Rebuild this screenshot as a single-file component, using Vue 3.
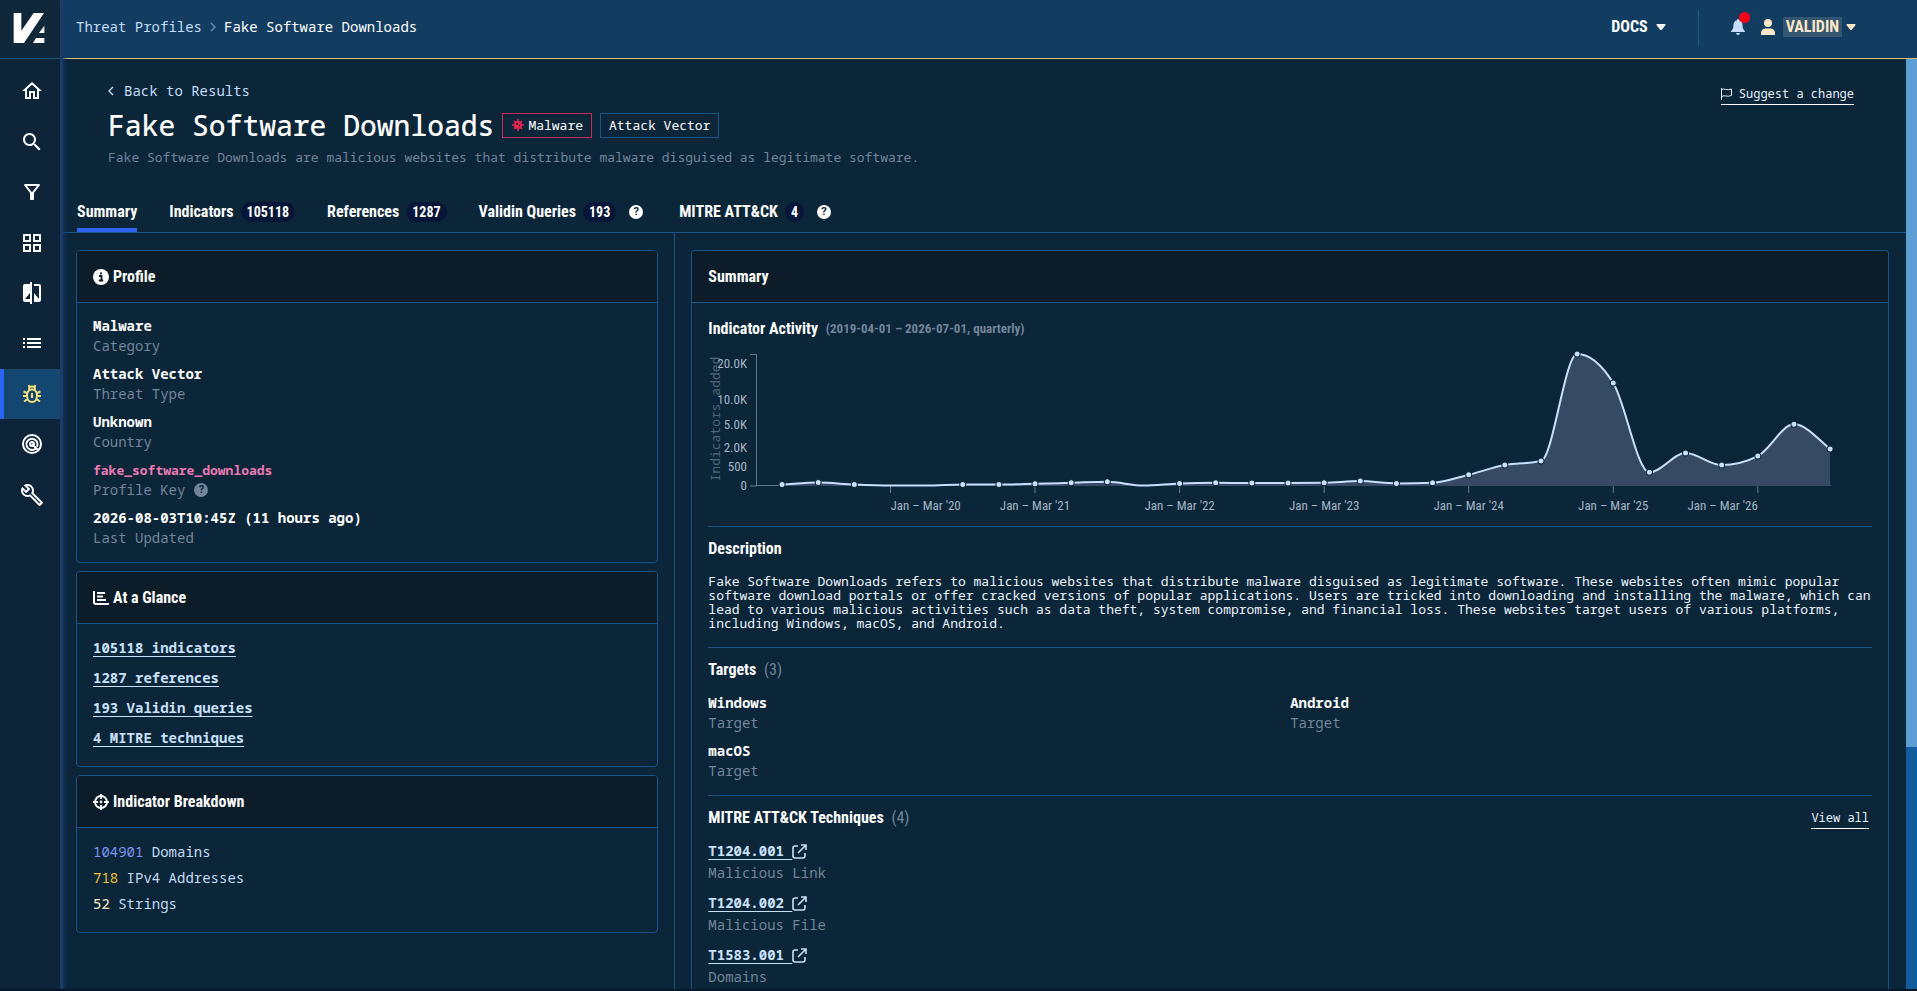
<script setup>
import { ref, computed } from 'vue';

const navItems = [
    { name: 'Home', path: 'M12 5.69l5 4.5V18h-2v-6H9v6H7v-7.81l5-4.5M12 3L2 12h3v8h6v-6h2v6h6v-8h3L12 3z' },
    { name: 'Search', path: 'M15.5 14h-.79l-.28-.27C15.41 12.59 16 11.11 16 9.5 16 5.91 13.09 3 9.5 3S3 5.91 3 9.5 5.91 16 9.5 16c1.61 0 3.09-.59 4.23-1.57l.27.28v.79l5 4.99L20.49 19l-4.99-5zm-6 0C7.01 14 5 11.99 5 9.5S7.01 5 9.5 5 14 7.01 14 9.5 11.99 14 9.5 14z' },
    { name: 'Filters', path: 'M7 6h10l-5.01 6.3L7 6zm-2.75-.39C6.27 8.2 10 13 10 13v6c0 .55.45 1 1 1h2c.55 0 1-.45 1-1v-6s3.72-4.8 5.74-7.39c.51-.66.04-1.61-.79-1.61H5.04c-.83 0-1.3.95-.79 1.61z' },
    { name: 'Dashboard', path: 'M3 3v8h8V3H3zm6 6H5V5h4v4zm-6 4v8h8v-8H3zm6 6H5v-4h4v4zm4-16v8h8V3h-8zm6 6h-4V5h4v4zm-6 4v8h8v-8h-8zm6 6h-4v-4h4v4z' },
    { name: 'Compare', path: 'M10 3H5c-1.1 0-2 .9-2 2v14c0 1.1.9 2 2 2h5v2h2V1h-2v2zm0 15H5l5-6v6zm9-15h-5v2h5v13l-5-6v9h5c1.1 0 2-.9 2-2V5c0-1.1-.9-2-2-2z' },
    { name: 'Lists', path: 'M3 13h2v-2H3v2zm0 4h2v-2H3v2zm0-8h2V7H3v2zm4 4h14v-2H7v2zm0 4h14v-2H7v2zM7 7v2h14V7H7z' },
    { name: 'Threat Profiles', active: true, stroke: 'M8.500 3l1 2M15.500 3l-1 2M9 7.500V7a3 2.500 0 0 1 6 0v.5M12 7.500c3 0 5 2.500 5 6s-2 6.500-5 6.500-5-3-5-6.500 2-6 5-6zM12 11v5M7 11l-3.500-1.500M17 11l3.500-1.500M7 14H3M17 14h4M7.500 17l-3.500 2.500M16.500 17l3.500 2.500' },
    { name: 'Radar', stroke: 'M12 3a9 9 0 1 0 0 18 9 9 0 1 0 0-18M15.800 16.400a5.600 5.600 0 1 1 1.200-1.600M12 12l6 6M12 10a2 2 0 1 0 0 4 2 2 0 1 0 0-4' },
    { name: 'Tools', path: 'M22.61 18.99l-9.08-9.08c.93-2.34.45-5.1-1.44-7C9.79.61 6.21.4 3.66 2.26L7.5 6.11 6.08 7.52 2.25 3.69C.39 6.23.6 9.82 2.9 12.11c1.86 1.86 4.57 2.35 6.89 1.48l9.11 9.11c.39.39 1.02.39 1.41 0l2.3-2.3c.4-.38.4-1.01 0-1.41zm-3 1.6l-9.46-9.46c-.61.45-1.29.72-2 .82-1.36.2-2.79-.21-3.83-1.25C3.37 9.76 2.93 8.5 3 7.26l3.09 3.09 4.24-4.24-3.09-3.09c1.24-.07 2.49.37 3.44 1.31 1.08 1.08 1.49 2.57 1.24 3.96-.12.71-.42 1.37-.88 1.96l9.45 9.45-.88.89z' },
];

const activeTab = ref('Summary');
const tabs = [
    { name: 'Summary' },
    { name: 'Indicators', count: 105118 },
    { name: 'References', count: 1287 },
    { name: 'Validin Queries', count: 193, help: true },
    { name: 'MITRE ATT&CK', count: 4, help: true },
];

const profile = [
    { value: 'Malware', label: 'Category' },
    { value: 'Attack Vector', label: 'Threat Type' },
    { value: 'Unknown', label: 'Country' },
    { value: 'fake_software_downloads', label: 'Profile Key', code: true },
    { value: '2026-08-03T10:45Z (11 hours ago)', label: 'Last Updated' },
];

const glance = ['105118 indicators', '1287 references', '193 Validin queries', '4 MITRE techniques'];

const breakdown = [
    { count: 104901, label: 'Domains', kind: 'domain' },
    { count: 718, label: 'IPv4 Addresses', kind: 'ip' },
    { count: 52, label: 'Strings', kind: 'string' },
];

const targets = ['Windows', 'Android', 'macOS'];

const techniques = [
    { id: 'T1204.001', name: 'Malicious Link' },
    { id: 'T1204.002', name: 'Malicious File' },
    { id: 'T1583.001', name: 'Domains' },
];

// Chart geometry, one point per quarter
const baseline = 148;
const startX = 74;
const stepX = 36.12;
const emptyQuarters = [3, 4, 10];
const heights = [1.5, 3.5, 1.5, 0.5, 0.5, 1.5, 1.5, 2.3, 3.3, 4.3, 0.5, 2.7, 3.3, 3, 3, 3.3, 5, 2.7, 3.3, 11.3, 21, 25, 132, 103, 13.7, 33, 21, 30, 61.7, 37];
const points = heights.map((h, i) => ({ x: startX + i * stepX, y: baseline - h }));
const dots = points.filter((p, i) => !emptyQuarters.includes(i));

const yTicks = [
    { label: '20.0K', y: 26 },
    { label: '10.0K', y: 62 },
    { label: '5.0K', y: 87 },
    { label: '2.0K', y: 110 },
    { label: '500', y: 129 },
    { label: '0', y: 148 },
];
const xTicks = ['20', '21', '22', '23', '24', '25', '26'].map((year, i, all) => ({
    label: `Jan – Mar '${year}`,
    x: startX + (3 + i * 4) * stepX,
    anchor: i === 0 ? 'start' : i === all.length - 1 ? 'end' : 'middle',
}));

// Smooth line that never overshoots its points
const linePath = computed(() => {
    const slopes = points.slice(1).map((p, i) => (p.y - points[i].y) / stepX);
    const tangents = points.map((p, i) => {
        if (i === 0) return slopes[0];
        if (i === points.length - 1) return slopes[i - 1] * 1.2;
        const a = slopes[i - 1];
        const b = slopes[i];
        if (a * b <= 0) return 0;
        return Math.sign(a) * 2 * Math.min(Math.abs(a), Math.abs(b), Math.abs(a + b) / 4);
    });
    let d = `M${points[0].x},${points[0].y}`;
    for (let i = 1; i < points.length; i++) {
        const p = points[i - 1];
        const q = points[i];
        const k = stepX / 3;
        d += `C${p.x + k},${p.y + k * tangents[i - 1]},${q.x - k},${q.y - k * tangents[i]},${q.x},${q.y}`;
    }
    return d;
});
const areaPath = computed(() => `${linePath.value}V${baseline}H${startX}Z`);
</script>

<template>
    <div class="app">
        <aside class="sidebar">
            <a class="logo" href="#" aria-label="Validin">
                <svg width="32" height="32" viewBox="0 0 96 96" fill="#fff">
                    <path d="M2 3H25V56L62 3H93L33 93H2Z" />
                    <path d="M94 41V63H78ZM69 78H94V93H60Z" />
                </svg>
            </a>
            <nav class="nav">
                <a v-for="item in navItems" :key="item.name" href="#" class="nav-item" :class="{ active: item.active }" :aria-label="item.name">
                    <svg width="24" height="24" viewBox="0 0 24 24">
                        <path v-if="item.path" :d="item.path" fill="currentColor" />
                        <path v-else :d="item.stroke" fill="none" stroke="currentColor" stroke-width="2" />
                    </svg>
                </a>
            </nav>
        </aside>

        <div class="page">
            <header class="topbar">
                <nav class="crumbs">
                    <a href="#">Threat Profiles</a>
                    <svg width="6" height="10" viewBox="0 0 6 10" fill="none" stroke="#6f90ab" stroke-width="1.4"><path d="M1 1l4 4-4 4" /></svg>
                    <span>Fake Software Downloads</span>
                </nav>
                <div class="account">
                    <button class="menu docs">
                        DOCS
                        <svg width="10" height="6" viewBox="0 0 10 6" fill="currentColor"><path d="M1 0h8q1 0 .5 1L6 5.500q-1 1-2 0L.5 1Q0 0 1 0z" /></svg>
                    </button>
                    <button class="bell" aria-label="Notifications">
                        <svg width="14" height="16" viewBox="0 0 14 16" fill="#c5dcfa"><path d="M7 0c.7 0 1 .5 1 1.200C10.300 1.700 11.500 3.600 11.500 6c0 3.500 1 4.500 2.300 6 .4.500 0 1-.5 1H.7c-.5 0-.9-.5-.5-1C1.500 10.500 2.500 9.500 2.500 6c0-2.400 1.200-4.300 3.500-4.800C6 .5 6.300 0 7 0zM5 14h4c0 1.200-1 2-2 2s-2-.8-2-2z" /></svg>
                        <span class="dot"></span>
                    </button>
                    <button class="menu user">
                        <svg width="14" height="16" viewBox="0 0 14 16" fill="currentColor"><circle cx="7" cy="4" r="4" /><path d="M0 16v-2c0-3 2-4.500 4.500-4.500h5C12 9.500 14 11 14 14v2z" /></svg>
                        <span class="user-name">VALIDIN</span>
                        <svg width="10" height="6" viewBox="0 0 10 6" fill="currentColor"><path d="M1 0h8q1 0 .5 1L6 5.500q-1 1-2 0L.5 1Q0 0 1 0z" /></svg>
                    </button>
                </div>
            </header>

            <div class="viewport">
                <main class="content">
                    <div class="intro">
                        <div>
                            <a class="back" href="#">
                                <svg width="6" height="10" viewBox="0 0 6 10" fill="none" stroke="currentColor" stroke-width="1.4"><path d="M5 1L1 5l4 4" /></svg>
                                Back to Results
                            </a>
                            <div class="title-row">
                                <h1>Fake Software Downloads</h1>
                                <span class="tag tag-malware">
                                    <svg width="12" height="12" viewBox="0 0 12 12">
                                        <circle cx="6" cy="6" r="4" fill="#e5254f" />
                                        <path d="M6 0v12M0 6h12M2 2l8 8M10 2l-8 8" stroke="#e5254f" stroke-width="1.6" />
                                        <circle cx="5" cy="5" r="1" fill="#0b2539" /><circle cx="7.500" cy="6.500" r=".7" fill="#0b2539" />
                                    </svg>
                                    Malware
                                </span>
                                <span class="tag">Attack Vector</span>
                            </div>
                            <p class="lead">Fake Software Downloads are malicious websites that distribute malware disguised as legitimate software.</p>
                        </div>
                        <a class="small-link suggest" href="#">
                            <svg width="11" height="12" viewBox="0 0 11 12" fill="none" stroke="currentColor"><path d="M.5 0v12M.5 1.500C3 0 6 3 10.500 1v6.500C6 9.500 4 6.500.5 8.500" /></svg>
                            Suggest a change
                        </a>
                    </div>

                    <div class="tabs" role="tablist">
                        <div v-for="tab in tabs" :key="tab.name" class="tab">
                            <button role="tab" :class="{ selected: activeTab === tab.name }" @click="activeTab = tab.name">
                                {{ tab.name }}
                                <span v-if="tab.count" class="pill">{{ tab.count }}</span>
                            </button>
                            <span v-if="tab.help" class="help">?</span>
                        </div>
                    </div>

                    <div class="columns">
                        <div class="side-column">
                            <section class="card">
                                <h2>
                                    <svg width="16" height="16" viewBox="0 0 16 16"><circle cx="8" cy="8" r="8" fill="#fff" /><path d="M6 7h2.500v4M5.800 11.500h4.400M7 4.300h2" fill="none" stroke="#0c1c28" stroke-width="1.8" /></svg>
                                    Profile
                                </h2>
                                <dl class="facts">
                                    <div v-for="fact in profile" :key="fact.label">
                                        <dd :class="{ code: fact.code }">{{ fact.value }}</dd>
                                        <dt>{{ fact.label }} <span v-if="fact.code" class="help muted">?</span></dt>
                                    </div>
                                </dl>
                            </section>

                            <section class="card">
                                <h2>
                                    <svg width="16" height="14" viewBox="0 0 16 14" fill="none" stroke="#fff" stroke-width="2"><path d="M1 0v11q0 2 2 2h13M4 2h8M4 5.500h6M4 9h9" /></svg>
                                    At a Glance
                                </h2>
                                <ul class="glance">
                                    <li v-for="item in glance" :key="item"><a href="#">{{ item }}</a></li>
                                </ul>
                            </section>

                            <section class="card">
                                <h2>
                                    <svg width="16" height="16" viewBox="0 0 16 16" fill="none" stroke="#fff" stroke-width="1.8"><circle cx="8" cy="8" r="6" /><path d="M8 0v5M8 11v5M0 8h5M11 8h5" /><circle cx="8" cy="8" r=".5" /></svg>
                                    Indicator Breakdown
                                </h2>
                                <ul class="breakdown">
                                    <li v-for="row in breakdown" :key="row.label"><span :class="row.kind">{{ row.count }}</span> {{ row.label }}</li>
                                </ul>
                            </section>
                        </div>

                        <div class="main-column">
                            <section class="card summary">
                                <h2>Summary</h2>
                                <div class="summary-body">
                                    <h3>Indicator Activity <small>(2019-04-01 – 2026-07-01, quarterly)</small></h3>
                                    <svg class="chart" viewBox="0 1 1163 171">
                                        <text class="y-title" transform="translate(12 81) rotate(-90)" text-anchor="middle">Indicators added</text>
                                        <text v-for="tick in yTicks" :key="tick.label" class="tick" x="39" :y="tick.y + 4" text-anchor="end">{{ tick.label }}</text>
                                        <path class="axis" d="M42 16.500h6.500v131.500h-6.500M48 147.500H1122" />
                                        <g v-for="tick in xTicks" :key="tick.label">
                                            <path class="axis" :d="`M${tick.x} 148v7`" />
                                            <text class="tick" :x="tick.x" y="172" :text-anchor="tick.anchor">{{ tick.label }}</text>
                                        </g>
                                        <path :d="areaPath" class="area" />
                                        <path :d="linePath" class="line" />
                                        <circle v-for="dot in dots" :key="dot.x" :cx="dot.x" :cy="dot.y" r="3" class="point" />
                                    </svg>

                                    <div class="block">
                                        <h3>Description</h3>
                                        <p class="description">Fake Software Downloads refers to malicious websites that distribute malware disguised as legitimate software. These websites often mimic popular software download portals or offer cracked versions of popular applications. Users are tricked into downloading and installing the malware, which can lead to various malicious activities such as data theft, system compromise, and financial loss. These websites target users of various platforms, including Windows, macOS, and Android.</p>
                                    </div>

                                    <div class="block">
                                        <h3>Targets <span class="total">(3)</span></h3>
                                        <dl class="targets">
                                            <div v-for="target in targets" :key="target">
                                                <dd>{{ target }}</dd>
                                                <dt>Target</dt>
                                            </div>
                                        </dl>
                                    </div>

                                    <div class="block">
                                        <div class="block-head">
                                            <h3>MITRE ATT&amp;CK Techniques <span class="total">(4)</span></h3>
                                            <a class="small-link" href="#">View all</a>
                                        </div>
                                        <ul class="techniques">
                                            <li v-for="item in techniques" :key="item.id">
                                                <a href="#"><span>{{ item.id }}&nbsp;</span><svg width="15" height="15" viewBox="0 0 15 15" fill="none" stroke="currentColor" stroke-width="1.6"><path d="M6 2H3Q1 2 1 4v8q0 2 2 2h8q2 0 2-2V9M9 1h5v5M14 1L6 9" /></svg></a>
                                                <p>{{ item.name }}</p>
                                            </li>
                                        </ul>
                                    </div>
                                </div>
                            </section>
                        </div>
                    </div>
                </main>
                <div class="scrollbar"><div class="thumb"></div></div>
            </div>
        </div>
    </div>
</template>

<style>
body {
    margin: 0;
    background: #0b2539;
}
</style>

<style scoped>
.app {
    --mono: "Noto Sans Mono", "DejaVu Sans Mono", monospace;
    --condensed: "Roboto Condensed", "Liberation Sans Narrow", Roboto, sans-serif;
    --line: #1a5484;
    --muted: #71869a;
    display: flex;
    height: 100vh;
    box-sizing: border-box;
    border-bottom: 2px solid #07182b;
    overflow: hidden;
    background: #0b2539;
    color: #fff;
    font-family: var(--mono);
    font-size: 14px;
    line-height: 20px;
}

a {
    color: inherit;
    text-decoration: none;
}

button {
    border: 0;
    padding: 0;
    background: none;
    color: inherit;
    font: inherit;
    cursor: pointer;
}

h1, h2, h3, p, ul, dl, dd {
    margin: 0;
    padding: 0;
}

ul {
    list-style: none;
}

svg {
    flex: none;
}

/* Sidebar */
.sidebar {
    position: relative;
    z-index: 1;
    flex: none;
    width: 60px;
    border-right: 3px solid #1b3c6b;
    background: #0e2439;
    box-shadow: 1px 0 5px #14396a;
}

.logo {
    display: flex;
    align-items: center;
    height: 59px;
    padding-left: 13px;
    padding-bottom: 2px;
    box-sizing: border-box;
    border-bottom: 1px solid var(--line);
    background: #11273a;
}

.nav {
    display: grid;
    grid-auto-rows: 1fr;
    height: 454px;
    padding-top: 7px;
}

.nav-item {
    display: flex;
    align-items: center;
    justify-content: center;
    border-left: 4px solid transparent;
}

.nav-item.active {
    border-color: #2c64f6;
    background: #134770;
    color: #f4dd7c;
}

/* Top bar */
.page {
    display: flex;
    flex-direction: column;
    flex: 1;
    min-width: 0;
}

.topbar {
    display: flex;
    justify-content: space-between;
    flex: none;
    height: 58px;
    padding: 0 61px 0 13px;
    border-bottom: 1px solid #d5c26b;
    background: #123d61;
}

.crumbs {
    display: flex;
    align-items: center;
    gap: 8px;
    height: 53px;
}

.crumbs a {
    color: #c2dcfb;
}

.account {
    display: flex;
    align-items: center;
    height: 54px;
    font-family: var(--condensed);
    font-size: 16px;
    font-weight: 700;
}

.menu {
    display: flex;
    align-items: center;
    gap: 8px;
}

.docs {
    height: 35px;
    padding-right: 32px;
    border-right: 1px solid #1c5682;
}

.bell {
    position: relative;
    display: flex;
    margin: 0 16px 0 32px;
}

.dot {
    position: absolute;
    top: -7px;
    right: -5px;
    width: 11px;
    height: 11px;
    border-radius: 50%;
    background: #fd0019;
}

.user {
    gap: 4px;
    color: #fde7c7;
}

.user-name {
    margin-left: 4px;
    padding: 0 3px;
    background: #345570;
}

/* Page body */
.viewport {
    display: flex;
    flex: 1;
    min-height: 0;
}

.content {
    display: flex;
    flex-direction: column;
    flex: 1;
    min-width: 0;
    overflow: hidden;
}

.scrollbar {
    flex: none;
    width: 11px;
    background: #125d9d;
}

.thumb {
    height: 74%;
    background: #5b9dd5;
}

.intro {
    display: flex;
    justify-content: space-between;
    padding: 22px 52px 0 45px;
}

.back {
    display: flex;
    align-items: center;
    gap: 10px;
    color: #c2dcfb;
}

.title-row {
    display: flex;
    align-items: center;
    gap: 8px;
    height: 48px;
}

h1 {
    font-size: 28px;
    font-weight: 500;
    line-height: 40px;
}

.tag {
    display: flex;
    align-items: center;
    gap: 4px;
    height: 23px;
    padding: 0 8px;
    border: 1px solid var(--line);
    font-size: 13px;
}

.tag-malware {
    padding-left: 9px;
    border-color: #c22a5a;
}

.lead {
    color: var(--muted);
    font-size: 13px;
    line-height: 16px;
}

.small-link {
    display: flex;
    align-items: center;
    gap: 7px;
    height: 20px;
    border-bottom: 1px solid #fff;
    color: #e6f0fc;
    font-size: 12px;
}

.suggest {
    margin-top: 3px;
}

/* Tabs */
.tabs {
    display: flex;
    gap: 32px;
    flex: none;
    margin-top: 26px;
    padding-left: 14px;
    border-bottom: 1px solid var(--line);
    font-family: var(--condensed);
    font-size: 16px;
    font-weight: 700;
}

.tab {
    display: flex;
    align-items: center;
    gap: 13px;
}

.tab:has(.help) + .tab {
    margin-left: 4px;
}

.tab button {
    display: flex;
    align-items: center;
    gap: 7px;
    height: 41px;
    box-sizing: border-box;
    border-top: 4px solid transparent;
    border-bottom: 4px solid transparent;
}

.tab button.selected {
    border-bottom-color: #2f63f0;
}

.pill {
    padding: 0 6px;
    border-radius: 10px;
    background: #071638;
    font-size: 14px;
}

.help {
    width: 14px;
    height: 14px;
    border-radius: 50%;
    background: #fff;
    color: #0b2539;
    font: 700 11px/14px Roboto, sans-serif;
    text-align: center;
}

.help.muted {
    background: var(--muted);
}

/* Columns and cards */
.columns {
    display: grid;
    grid-template-columns: 612fr 1230fr;
    flex: 1;
}

.side-column {
    display: flex;
    flex-direction: column;
    gap: 8px;
    padding: 17px 16px 0 13px;
    border-right: 1px solid var(--line);
}

.main-column {
    display: flex;
    flex-direction: column;
    padding: 17px 17px 0 16px;
}

.card {
    border: 1px solid var(--line);
    border-radius: 4px;
    overflow: hidden;
}

.summary {
    flex: 1;
    border-bottom: 0;
    border-radius: 4px 4px 0 0;
}

h2 {
    display: flex;
    align-items: center;
    gap: 4px;
    height: 51px;
    padding: 0 16px;
    border-bottom: 1px solid var(--line);
    background: #0c1c28;
    font-family: var(--condensed);
    font-size: 16px;
    font-weight: 700;
}

.facts {
    display: grid;
    gap: 8px;
    padding: 13px 16px 14px;
}

.facts > div, .targets > div {
    display: flex;
    flex-direction: column;
}

dd {
    font-weight: 700;
}

dd.code {
    color: #ec7ab4;
    font-size: 13px;
}

dt {
    display: flex;
    align-items: center;
    gap: 9px;
    color: var(--muted);
}

.glance, .breakdown {
    display: grid;
    gap: 8px;
    padding: 13px 16px 17px;
    line-height: 22px;
}

.glance a {
    color: #c9e0fb;
    font-weight: 700;
    text-decoration: underline;
    text-underline-offset: 3px;
}

.breakdown {
    gap: 4px;
    color: #c2dcf3;
}

.domain {
    color: #7c96f2;
}

.ip {
    color: #f1c232;
}

.string {
    color: #fbeecb;
}

/* Summary card */
.summary-body {
    padding: 16px 16px 0;
}

h3 {
    font-family: var(--condensed);
    font-size: 16px;
    font-weight: 700;
}

h3 small {
    margin-left: 4px;
    color: var(--muted);
    font-size: 13px;
    vertical-align: top;
}

.total {
    margin-left: 4px;
    color: var(--muted);
    font-weight: 400;
}

.chart {
    display: block;
    width: 100%;
    margin-bottom: 16px;
    overflow: visible;
}

.tick {
    fill: #a3b6c6;
    font-family: var(--condensed);
    font-size: 13px;
}

.y-title {
    fill: #50677a;
    font-family: var(--mono);
    font-size: 13px;
}

.axis {
    fill: none;
    stroke: #62788a;
}

.area {
    fill: #364b63;
}

.line {
    fill: none;
    stroke: #c9e0fb;
    stroke-width: 2;
}

.point {
    fill: #c9e0fb;
    stroke: #0b2539;
}

.block {
    padding: 12px 0 17px;
    border-top: 1px solid var(--line);
}

.description {
    margin: 15px -4px 0 0;
    color: #eaf3fd;
    font-size: 13px;
    line-height: 14px;
}

.targets {
    display: grid;
    grid-template-columns: 1fr 1fr;
    gap: 8px 0;
    margin: 13px 0 -3px;
}

.block-head {
    display: flex;
    justify-content: space-between;
    padding-right: 3px;
}

.techniques {
    display: grid;
    gap: 8px;
    margin-top: 11px;
    line-height: 22px;
}

.techniques a {
    display: flex;
    align-items: center;
    height: 22px;
    color: #c9e0fb;
    font-weight: 700;
}

.techniques a span {
    text-decoration: underline;
    text-underline-offset: 3px;
}

.techniques p {
    color: var(--muted);
}
</style>
